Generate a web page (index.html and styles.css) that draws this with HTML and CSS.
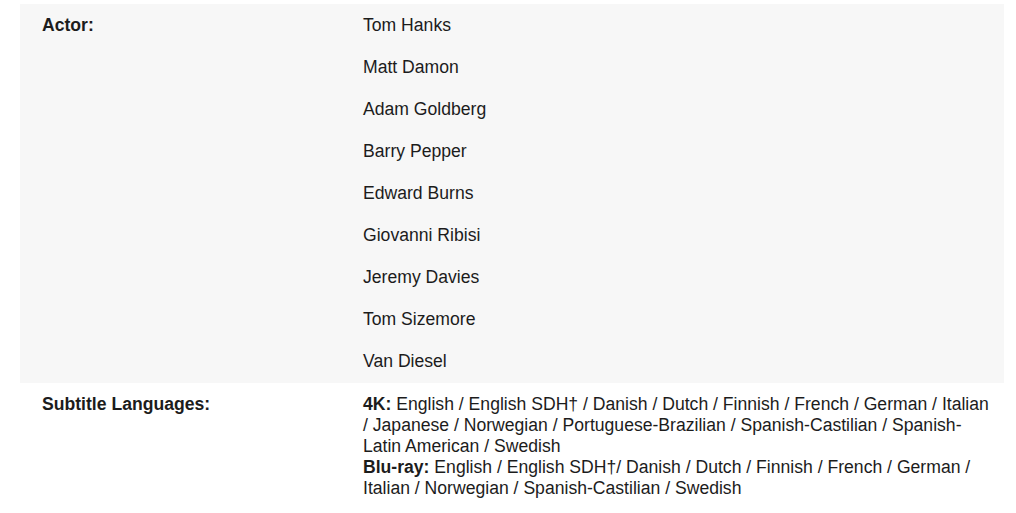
FILE: index.html
```html
<!DOCTYPE html>
<html>
<head>
<meta charset="utf-8">
<link rel="stylesheet" href="styles.css">
</head>
<body>
<div class="specs">
  <div class="row shaded">
    <div class="label">Actor:</div>
    <div class="value list">
      <div>Tom Hanks</div>
      <div>Matt Damon</div>
      <div>Adam Goldberg</div>
      <div>Barry Pepper</div>
      <div>Edward Burns</div>
      <div>Giovanni Ribisi</div>
      <div>Jeremy Davies</div>
      <div>Tom Sizemore</div>
      <div>Van Diesel</div>
    </div>
  </div>
  <div class="row">
    <div class="label">Subtitle Languages:</div>
    <div class="value">
      <div><b>4K:</b> English / English SDH† / Danish / Dutch / Finnish / French / German / Italian / Japanese / Norwegian / Portuguese-Brazilian / Spanish-Castilian / Spanish-Latin American / Swedish</div>
      <div><b>Blu-ray:</b> English / English SDH†/ Danish / Dutch / Finnish / French / German / Italian / Norwegian / Spanish-Castilian / Swedish</div>
    </div>
  </div>
</div>
</body>
</html>
```

FILE: styles.css
```css
html, body {
  margin: 0;
  background: #ffffff;
}
body {
  padding: 4px 12px 0 20px;
  font-family: "Liberation Sans", Arial, sans-serif;
  font-size: 17.6px;
  line-height: 21px;
  color: #1c1c1c;
}
.specs {
  display: flex;
  flex-direction: column;
}
.row {
  display: grid;
  grid-template-columns: 321px 1fr;
}
.row.shaded {
  background: #f7f7f7;
}
.label {
  font-weight: bold;
  padding: 11px 0 0 22px;
}
.value {
  padding: 11px 8px 11px 22px;
}
.list {
  display: flex;
  flex-direction: column;
  gap: 21px;
  padding-top: 11px;
  padding-bottom: 11px;
}
b {
  font-weight: bold;
}
```
